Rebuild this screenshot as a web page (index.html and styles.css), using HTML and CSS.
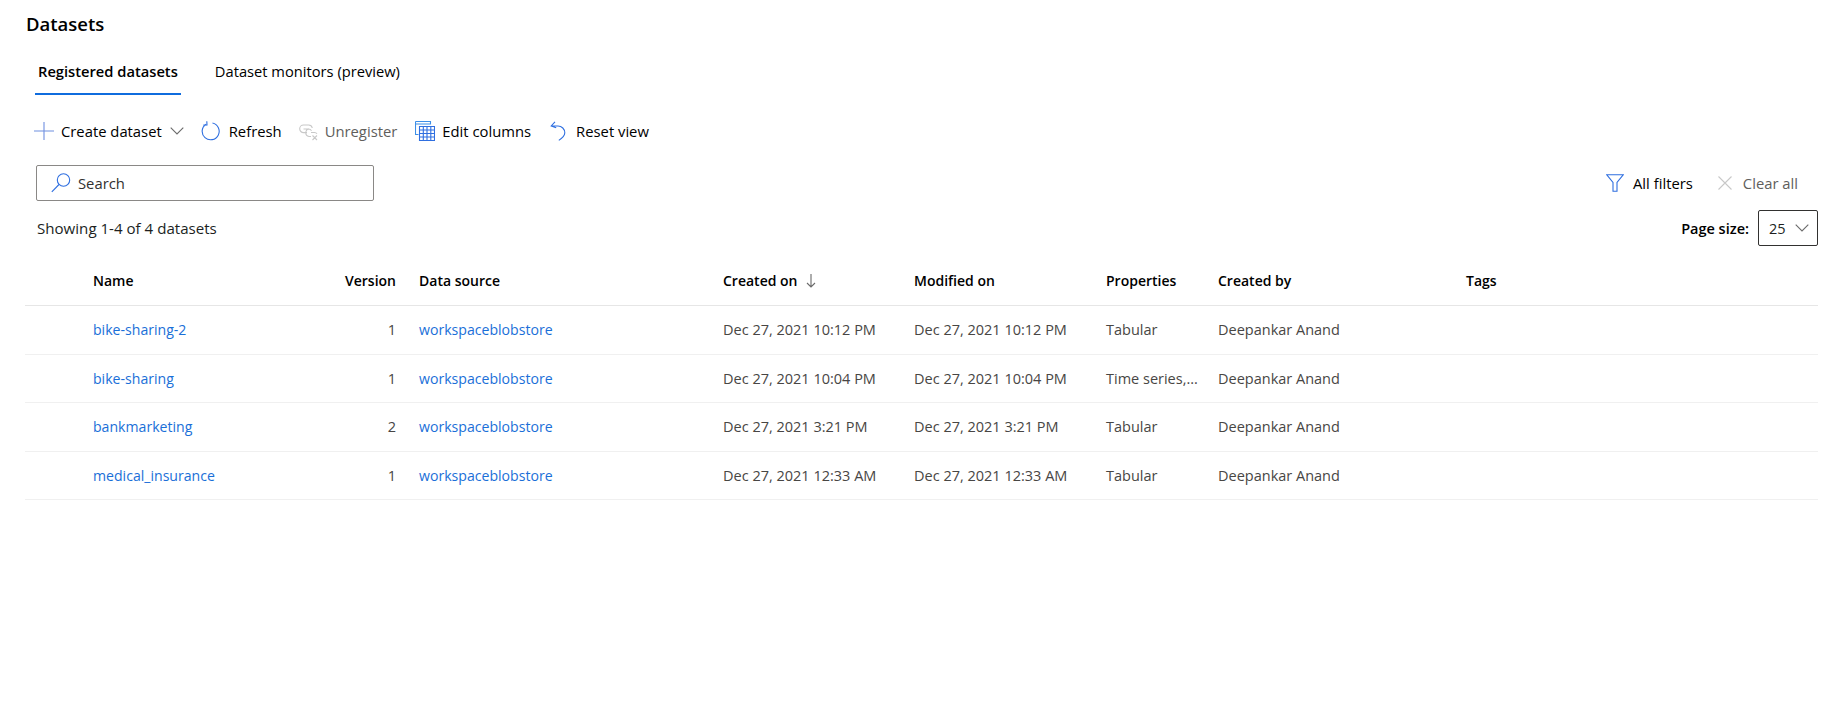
FILE: index.html
```html
<!DOCTYPE html>
<html lang="en">
<head>
<meta charset="utf-8">
<title>Datasets</title>
<link rel="stylesheet" href="styles.css">
</head>
<body>
<main class="page">
  <h1 class="title">Datasets</h1>
  <nav class="tabs">
    <a class="tab active">Registered datasets</a>
    <a class="tab">Dataset monitors (preview)</a>
  </nav>
  <div class="toolbar">
    <button class="cmd cmd-create">
      <svg class="ico" viewBox="0 0 20 20"><path d="M10 1v18M0 10h20" class="st-plus"/></svg>
      <span>Create dataset</span>
      <svg class="chev" viewBox="0 0 14 8"><path d="M.7 .7L7 7l6.300-6.300" class="st-grey"/></svg>
    </button>
    <button class="cmd cmd-refresh">
      <svg class="ico" viewBox="0 0 20 20"><path d="M11.500 2a8.500 8.500 0 1 1-6.500 1.200M5.800 .3l.2 3.600-3.600.2" class="st-blue"/></svg>
      <span>Refresh</span>
    </button>
    <button class="cmd cmd-unreg disabled">
      <svg class="ico" viewBox="0 0 20 20"><path d="M8 4H5.500a3.800 3.800 0 0 0 0 7.600H9M5.500 8h5a3.500 3.500 0 0 1 3 1.700M8 4h2.500a3.800 3.800 0 0 1 3.800 3M11 8a3.800 3.800 0 0 0 0 7.500h2M13 11.500h3.500a3 3 0 0 1 2.500 1.300M14.500 14.500l4.500 4.500M19 14.500l-4.500 4.500" class="st-dis"/></svg>
      <span>Unregister</span>
    </button>
    <button class="cmd cmd-edit">
      <svg class="ico" viewBox="0 0 20 20"><path d="M.5 .5h15v3M.5 .5v13h3M.5 3h15" class="st-blue2"/><path d="M4.500 5.500h15v14h-15zM4.500 9h15M4.500 12.500h15M4.500 16h15M8.300 5.500v14M12 5.500v14M15.800 5.500v14" class="st-blue"/></svg>
      <span>Edit columns</span>
    </button>
    <button class="cmd cmd-reset">
      <svg class="ico-reset" viewBox="0 0 16 20"><path d="M5 .8L1.200 5l5 1.800M1.500 5H8a6.800 6.800 0 0 1 6.800 6.800c0 3-2.800 5.500-6 7.600" class="st-blue"/></svg>
      <span>Reset view</span>
    </button>
  </div>
  <div class="filter-row">
    <label class="search">
      <svg class="search-ico" viewBox="0 0 20 20"><circle cx="12.500" cy="7" r="6.200" class="st-blue"/><path d="M8 11.500L.8 18.800" class="st-blue"/></svg>
      <span>Search</span>
    </label>
    <div class="filter-actions">
      <button class="cmd cmd-filters">
        <svg class="filter-ico" viewBox="0 0 18 18"><path d="M.8 .8h16.400L11 8.500v8.700H7V8.500z" class="st-blue"/></svg>
        <span>All filters</span>
      </button>
      <button class="cmd cmd-clear disabled">
        <svg class="clear-ico" viewBox="0 0 14 14"><path d="M.5 .5l13 13M13.500 .5l-13 13" class="st-dis"/></svg>
        <span>Clear all</span>
      </button>
    </div>
  </div>
  <div class="meta-row">
    <span class="count">Showing 1-4 of 4 datasets</span>
    <div class="pager">
      <span class="pager-label">Page size:</span>
      <div class="select"><span>25</span>
        <svg class="chev" viewBox="0 0 14 8"><path d="M.7 .7L7 7l6.300-6.300" class="st-grey"/></svg>
      </div>
    </div>
  </div>
  <div class="table">
    <div class="row head">
      <span></span><span>Name</span><span class="num">Version</span><span>Data source</span>
      <span class="sorted">Created on
        <svg class="sort-ico" viewBox="0 0 10 14"><path d="M5 0v13M1 9l4 4 4-4" class="st-grey"/></svg>
      </span>
      <span>Modified on</span><span>Properties</span><span>Created by</span><span>Tags</span>
    </div>
    <div class="row">
      <span></span><a class="link">bike-sharing-2</a><span class="num">1</span><a class="link">workspaceblobstore</a>
      <span>Dec 27, 2021 10:12 PM</span><span>Dec 27, 2021 10:12 PM</span><span>Tabular</span><span>Deepankar Anand</span><span></span>
    </div>
    <div class="row">
      <span></span><a class="link">bike-sharing</a><span class="num">1</span><a class="link">workspaceblobstore</a>
      <span>Dec 27, 2021 10:04 PM</span><span>Dec 27, 2021 10:04 PM</span><span>Time series,...</span><span>Deepankar Anand</span><span></span>
    </div>
    <div class="row">
      <span></span><a class="link">bankmarketing</a><span class="num">2</span><a class="link">workspaceblobstore</a>
      <span>Dec 27, 2021 3:21 PM</span><span>Dec 27, 2021 3:21 PM</span><span>Tabular</span><span>Deepankar Anand</span><span></span>
    </div>
    <div class="row">
      <span></span><a class="link">medical_insurance</a><span class="num">1</span><a class="link">workspaceblobstore</a>
      <span>Dec 27, 2021 12:33 AM</span><span>Dec 27, 2021 12:33 AM</span><span>Tabular</span><span>Deepankar Anand</span><span></span>
    </div>
  </div>
</main>
</body>
</html>
```
FILE: styles.css
```css
* { box-sizing: border-box; }
html, body { margin: 0; padding: 0; background: #fff; }
body {
  font-family: "Open Sans", "Noto Sans", "Liberation Sans", sans-serif;
  font-size: 14.500px;
  color: #201f1e;
  height: 727px;
  overflow: hidden;
}
.page { padding: 12px 27px 0 26px; }
.title { margin: 0; font-size: 18.500px; line-height: 24px; font-weight: 600; color: #000; }
.tabs { display: flex; margin: 13px 0 0 9px; height: 46px; font-size: 14.700px; }
.tab { display: flex; align-items: center; height: 46px; padding: 0 3px; color: #000; margin-right: 31px; border-bottom: 2px solid transparent; }
.tab.active { font-weight: 600; border-bottom-color: #0f6cde; }
.toolbar { display: flex; align-items: center; height: 32px; margin: 20px 0 0 8px; font-size: 14.800px; }
.cmd { display: flex; align-items: center; border: 0; background: none; padding: 0; font: inherit; color: #000; }
.cmd.disabled { color: #605e5c; }
.ico { width: 20px; height: 20px; margin-right: 7px; }
.cmd-refresh .ico { margin-right: 8px; }
.ico-reset { width: 16px; height: 20px; margin-right: 10px; }
.chev { width: 14px; height: 8px; }
.cmd-create .chev { margin-left: 8px; }
.cmd-refresh { margin-left: 17px; }
.cmd-unreg { margin-left: 16px; }
.cmd-edit { margin-left: 18px; }
.cmd-reset { margin-left: 19px; }
svg path, svg circle { fill: none; stroke-width: 1.100; }
.st-blue { stroke: #2f6fe0; }
.st-blue2 { stroke: #3d8fe8; }
.st-plus { stroke: #6f8fe0; }
.st-grey { stroke: #6b6b6b; }
.st-dis { stroke: #c8c8c8; }
.filter-row { display: flex; align-items: center; justify-content: space-between; margin: 18px 0 0 10px; height: 36px; font-size: 14.800px; }
.search { display: flex; align-items: center; width: 338px; height: 36px; border: 1px solid #8a8886; border-radius: 2px; padding-left: 14px; color: #323130; }
.search-ico { width: 20px; height: 20px; margin-right: 7px; }
.filter-actions { display: flex; align-items: center; margin-right: 20px; }
.filter-ico { width: 18px; height: 18px; margin-right: 9px; }
.clear-ico { width: 14px; height: 14px; margin-right: 11px; }
.cmd-clear { margin-left: 25px; }
.meta-row { display: flex; align-items: center; justify-content: space-between; margin: 9px 0 0 11px; height: 36px; }
.count { color: #201f1e; font-size: 15.100px; }
.pager { display: flex; align-items: center; }
.pager-label { font-weight: 600; color: #000; margin-right: 9px; }
.select { display: flex; align-items: center; justify-content: space-between; width: 60px; height: 36px; border: 1px solid #323130; border-radius: 2px; padding: 0 8px 0 10px; }
.table { margin: 12px 0 0 -1px; }
.row {
  display: grid;
  grid-template-columns: 68px 231px 95px 304px 191px 192px 112px 248px 1fr;
  height: 48.500px;
  align-items: center;
  border-bottom: 1px solid #f0f0f0;
  color: #484644;
}
.head { height: 48px; padding-bottom: 2px; border-bottom: 1px solid #e6e6e6; color: #000; font-weight: 600; font-size: 14px; }
.num { text-align: right; padding-right: 23px; }
.link { color: #1a6fd8; font-size: 14.100px; }
.sorted { display: flex; align-items: center; }
.sort-ico { width: 10px; height: 14px; margin-left: 8px; }
```
